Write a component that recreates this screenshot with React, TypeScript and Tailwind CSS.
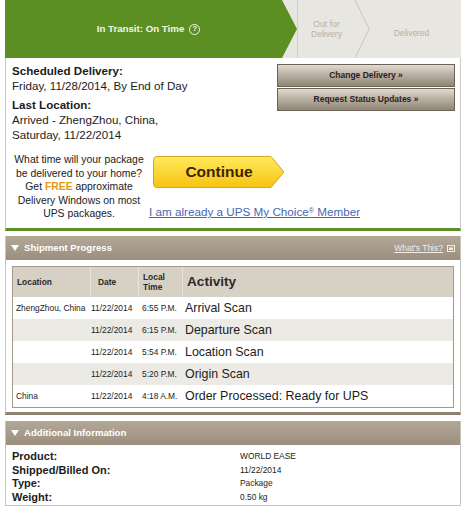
const rows = [
  { loc: "ZhengZhou, China", date: "11/22/2014", time: "6:55 P.M.", act: "Arrival Scan" },
  { loc: "", date: "11/22/2014", time: "6:15 P.M.", act: "Departure Scan" },
  { loc: "", date: "11/22/2014", time: "5:54 P.M.", act: "Location Scan" },
  { loc: "", date: "11/22/2014", time: "5:20 P.M.", act: "Origin Scan" },
  { loc: "China", date: "11/22/2014", time: "4:18 A.M.", act: "Order Processed: Ready for UPS" },
];

const info = [
  { label: "Product:", value: "WORLD EASE" },
  { label: "Shipped/Billed On:", value: "11/22/2014" },
  { label: "Type:", value: "Package" },
  { label: "Weight:", value: "0.50 kg" },
];

function SectionHeader({ title, extra }: { title: string; extra?: boolean }) {
  return (
    <div className="flex h-[24px] items-center justify-between bg-gradient-to-b from-[#b3a898] to-[#9b8e7d] pl-[5px] pr-[5px]">
      <div className="flex items-center gap-[5px] text-[9.6px] font-bold text-white">
        <svg width="8" height="6" viewBox="0 0 8 6">
          <polygon points="0,0 8,0 4,6" fill="#ffffff" />
        </svg>
        {title}
      </div>
      {extra && (
        <div className="flex items-center gap-[4px] text-[8.5px] text-[#f1ede6]">
          <span className="underline">What's This?</span>
          <svg width="8" height="7" viewBox="0 0 8 7">
            <rect x="0.5" y="0.5" width="7" height="6" fill="none" stroke="#f1ede6" />
            <rect x="2" y="2.5" width="4" height="2.5" fill="#f1ede6" />
          </svg>
        </div>
      )}
    </div>
  );
}

export default function App() {
  return (
    <div className="h-[515px] w-[466px] bg-white px-[5px] font-['Liberation_Sans',Arial,sans-serif] text-[#1c1c1c]">
      {/* Status banner */}
      <div className="flex h-[58px] bg-[#e7e6e1]">
        <div className="flex w-[277px] items-center justify-center bg-[#5c8f22] pl-[10px] text-[9.7px] font-bold text-[#f3f6ea]">
          In Transit: On Time
          <span className="ml-[5px] inline-flex h-[11px] w-[11px] items-center justify-center rounded-full border-[1.3px] border-[#f3f6ea] text-[7.5px] leading-none">
            ?
          </span>
        </div>
        <svg width="15" height="58" viewBox="0 0 15 58" className="shrink-0">
          <polygon points="0,0 15,29 0,58" fill="#5c8f22" />
        </svg>
        <div className="w-px bg-[#cfccc3]" />
        <div className="flex w-[57px] items-center justify-center text-center text-[8.6px] leading-[10px] text-[#b6b1a6]">
          Out for
          <br />
          Delivery
        </div>
        <svg width="15" height="58" viewBox="0 0 15 58" className="shrink-0">
          <polyline points="0,0 14,29 0,58" fill="none" stroke="#c9c5bb" />
        </svg>
        <div className="flex flex-1 items-center justify-center pr-[8px] pt-[8px] text-[8.4px] text-[#b6b1a6]">
          Delivered
        </div>
      </div>

      {/* Delivery details */}
      <div className="h-[173px] border-x border-b-[3px] border-x-[#cac9c1] border-b-[#5e9028]">
        <div className="flex justify-between pl-[6px] pr-[5px] pt-[5px]">
          <div className="text-[11.6px] leading-[15px]">
            <div className="font-bold">Scheduled Delivery:</div>
            <div>Friday, 11/28/2014, By End of Day</div>
            <div className="mt-[4px] font-bold">Last Location:</div>
            <div>Arrived - ZhengZhou, China,</div>
            <div>Saturday, 11/22/2014</div>
          </div>
          <div className="mt-[1px] flex w-[178px] flex-col gap-[1px]">
            <button className="h-[23px] border border-[#6d6357] bg-gradient-to-b from-[#e0d9cf] to-[#8f8475] text-[8.5px] font-bold text-[#2b2118]">
              Change Delivery »
            </button>
            <button className="h-[23px] border border-[#6d6357] bg-gradient-to-b from-[#e0d9cf] to-[#8f8475] text-[8.5px] font-bold text-[#2b2118]">
              Request Status Updates »
            </button>
          </div>
        </div>

        <div className="mt-[11px] flex pl-[4px]">
          <div className="w-[138px] text-center text-[10.4px] leading-[13.5px] text-[#222]">
            <div>What time will your package</div>
            <div>be delivered to your home?</div>
            <div>
              Get <b className="text-[#e39a12]">FREE</b> approximate
            </div>
            <div>Delivery Windows on most</div>
            <div>UPS packages.</div>
          </div>
          <div className="ml-[1px] flex flex-col">
            <div className="relative ml-[4px] mt-[3px] flex h-[32px] w-[132px] items-center justify-center">
              <svg width="132" height="32" viewBox="0 0 132 32" className="absolute inset-0">
                <defs>
                  <linearGradient id="cont" x1="0" y1="0" x2="0" y2="1">
                    <stop offset="0" stopColor="#ffea5c" />
                    <stop offset="1" stopColor="#f6c312" />
                  </linearGradient>
                </defs>
                <path
                  d="M4,0.5 H118 L131,16 L118,31.5 H4 Q0.5,31.5 0.5,28 V4 Q0.5,0.5 4,0.5 Z"
                  fill="url(#cont)"
                  stroke="#d4a526"
                />
              </svg>
              <span className="relative text-[15.5px] font-bold text-[#3b2600]">Continue</span>
            </div>
            <a className="mt-[16px] text-[11.7px] leading-[15px] text-[#4668b2] underline">
              I am already a UPS My Choice<sup className="text-[7px]">®</sup> Member
            </a>
          </div>
        </div>
      </div>

      {/* Shipment progress */}
      <div className="mt-[5px] border-x border-b-[3px] border-x-[#c9c4bb] border-b-[#8e8170]">
        <SectionHeader title="Shipment Progress" extra />
        <div className="px-[6px] pb-[4px] pt-[6px]">
          <div className="border border-[#a39a8d]">
            <div className="grid h-[30px] grid-cols-[77px_48px_44px_1fr] bg-[#d7d0c4] font-bold text-[#2a2a2a]">
              <div className="flex items-center pl-[4px] text-[8.4px]">Location</div>
              <div className="flex items-center border-l border-[#e9e4db] pl-[7px] text-[8.4px]">Date</div>
              <div className="flex items-center border-l border-[#e9e4db] pl-[4px] text-[8.4px] leading-[10px]">
                Local
                <br />
                Time
              </div>
              <div className="flex items-center border-l border-[#e9e4db] pl-[4px] text-[13.6px]">Activity</div>
            </div>
            {rows.map((r, i) => (
              <div
                key={i}
                className={`grid h-[22px] grid-cols-[77px_48px_44px_1fr] items-center ${
                  i % 2 === 1 ? "bg-[#ebeae5]" : "bg-white"
                }`}
              >
                <div className="pl-[3px] text-[8.4px]">{r.loc}</div>
                <div className="pl-[1px] text-[8.4px]">{r.date}</div>
                <div className="pl-[4px] text-[8.4px]">{r.time}</div>
                <div className="pl-[3px] text-[12.4px]">{r.act}</div>
              </div>
            ))}
          </div>
        </div>
      </div>

      {/* Additional information */}
      <div className="mt-[6px] border-x border-b border-[#c9c4bb]">
        <SectionHeader title="Additional Information" />
        <div className="grid grid-cols-[228px_1fr] items-center pb-[1px] pl-[6px] pt-[5px] leading-[13.5px]">
          {info.map((it) => (
            <div key={it.label} className="contents">
              <div className="text-[11px] font-bold">{it.label}</div>
              <div className="text-[8.4px]">{it.value}</div>
            </div>
          ))}
        </div>
      </div>
    </div>
  );
}
